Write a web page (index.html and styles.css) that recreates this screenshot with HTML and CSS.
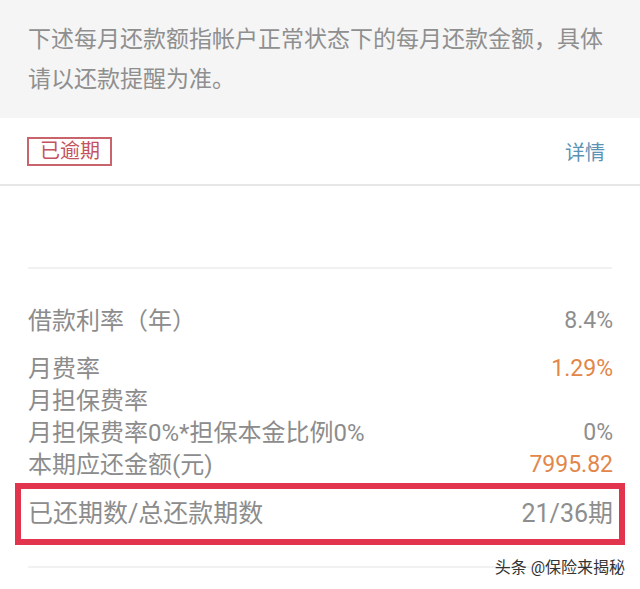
FILE: index.html
```html
<!DOCTYPE html>
<html lang="zh-CN">
<head>
<meta charset="utf-8">
<title>还款详情</title>
<link rel="stylesheet" href="styles.css">
</head>
<body>
<div class="page">
  <div class="notice">下述每月还款额指帐户正常状态下的每月还款金额，具体请以还款提醒为准。</div>
  <div class="status-row">
    <span class="badge">已逾期</span>
    <span class="link">详情</span>
  </div>
  <div class="blank"></div>
  <div class="divider"></div>
  <section class="details">
    <div class="row first"><span class="label">借款利率（年）</span><span class="value">8.4%</span></div>
    <div class="row"><span class="label">月费率</span><span class="value orange">1.29%</span></div>
    <div class="row"><span class="label">月担保费率</span><span class="value"></span></div>
    <div class="row"><span class="label">月担保费率0%*担保本金比例0%</span><span class="value">0%</span></div>
    <div class="row"><span class="label">本期应还金额(元)</span><span class="value orange">7995.82</span></div>
    <div class="row highlight"><span class="label">已还期数/总还款期数</span><span class="value">21/36期</span></div>
  </section>
  <div class="divider bottom"></div>
  <div class="watermark">头条 @保险来揭秘</div>
</div>
</body>
</html>
```

FILE: styles.css
```css
html, body {
  margin: 0;
  padding: 0;
  background: #ffffff;
}

body {
  font-family: "Roboto", "Noto Sans CJK SC", "Noto Sans", sans-serif;
  width: 640px;
  height: 589px;
  overflow: hidden;
}

.page {
  position: relative;
  width: 640px;
  height: 589px;
}

.notice {
  background: #f5f5f5;
  height: 118px;
  box-sizing: border-box;
  padding: 20px 28px 0 28px;
  font-size: 23px;
  line-height: 40px;
  color: #8f8f8f;
}

.status-row {
  height: 68px;
  box-sizing: border-box;
  padding: 0 35px 0 27px;
  display: flex;
  align-items: center;
  justify-content: space-between;
  border-bottom: 2px solid #e6e6e6;
}

.badge {
  border: 2px solid #c9646c;
  color: #c4535d;
  font-size: 20px;
  line-height: 25px;
  padding: 0 10px 0 11px;
}

.link {
  color: #5b93b5;
  font-size: 20px;
  line-height: 26px;
  margin-top: 4px;
}

.blank {
  height: 81px;
}

.divider {
  height: 2px;
  background: #f1f1f1;
  margin: 0 28px;
}

.divider.bottom {
  margin-top: 21px;
}

.details {
  padding: 36px 27px 0 28px;
}

.row {
  display: flex;
  justify-content: space-between;
  align-items: center;
  height: 32px;
  font-size: 24px;
  line-height: 32px;
  color: #8c8c8c;
}

.row.first {
  margin-bottom: 16px;
}

.value {
  color: #8e8e8e;
  font-size: 23px;
}

.value.orange {
  color: #e28649;
}

.row.highlight {
  height: 62px;
  box-sizing: border-box;
  margin: 2px -12px 0 -13px;
  padding: 0 6px 0 7px;
  border: 6px solid #e2344c;
  font-size: 25px;
}

.row.highlight .value {
  font-size: 25px;
}

.watermark {
  position: absolute;
  right: 15px;
  top: 557px;
  font-size: 16px;
  line-height: 22px;
  color: #333333;
  text-shadow: 0 0 2px #ffffff, 0 0 2px #ffffff;
}
```
